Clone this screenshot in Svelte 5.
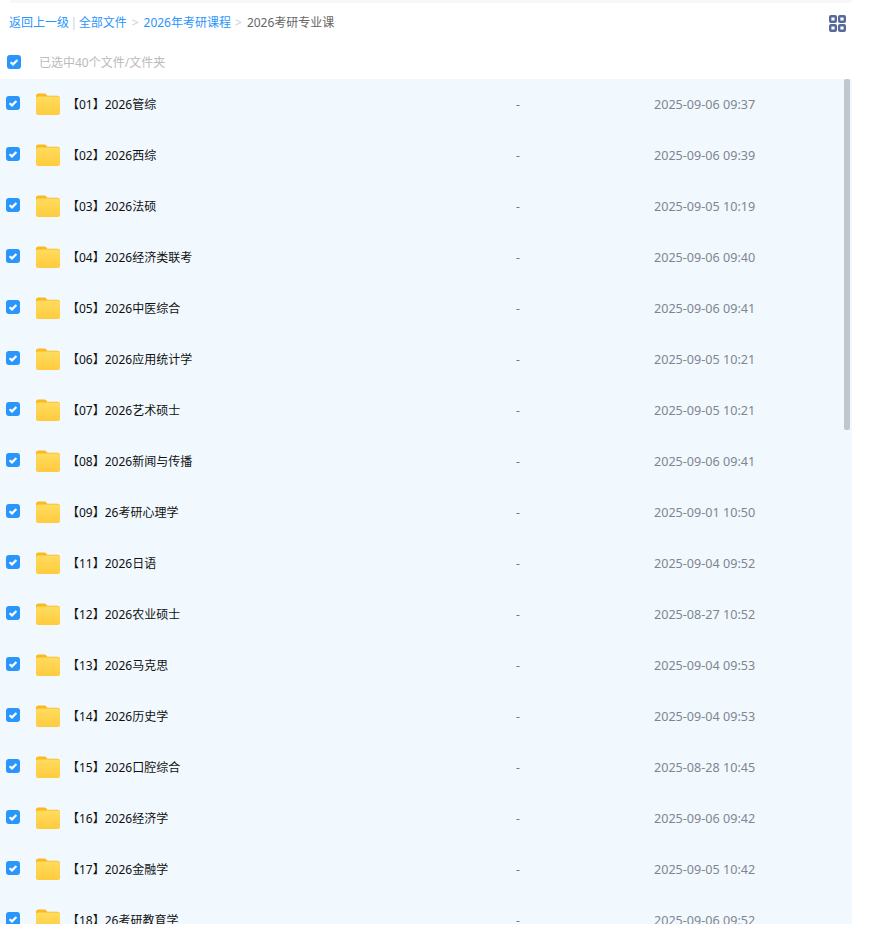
<script>
    const folders = [
        ['【01】2026管综', '2025-09-06 09:37'],
        ['【02】2026西综', '2025-09-06 09:39'],
        ['【03】2026法硕', '2025-09-05 10:19'],
        ['【04】2026经济类联考', '2025-09-06 09:40'],
        ['【05】2026中医综合', '2025-09-06 09:41'],
        ['【06】2026应用统计学', '2025-09-05 10:21'],
        ['【07】2026艺术硕士', '2025-09-05 10:21'],
        ['【08】2026新闻与传播', '2025-09-06 09:41'],
        ['【09】26考研心理学', '2025-09-01 10:50'],
        ['【11】2026日语', '2025-09-04 09:52'],
        ['【12】2026农业硕士', '2025-08-27 10:52'],
        ['【13】2026马克思', '2025-09-04 09:53'],
        ['【14】2026历史学', '2025-09-04 09:53'],
        ['【15】2026口腔综合', '2025-08-28 10:45'],
        ['【16】2026经济学', '2025-09-06 09:42'],
        ['【17】2026金融学', '2025-09-05 10:42'],
        ['【18】26考研教育学', '2025-09-06 09:52']
    ];
</script>

{#snippet checkbox()}
    <svg class="check" viewBox="0 0 14 14" width="14" height="14">
        <rect width="14" height="14" rx="3" fill="#2a95fb" />
        <path d="M3.600 7.200 6 9.400 10.400 5" fill="none" stroke="#fff" stroke-width="2.200" />
    </svg>
{/snippet}

<div class="page">
    <div class="topline"></div>
    <div class="crumbs">
        <a href="#back">返回上一级</a>
        <span class="sep bar">|</span>
        <a href="#all">全部文件</a>
        <span class="sep">&gt;</span>
        <a href="#course">2026年考研课程</a>
        <span class="sep last">&gt;</span>
        <span class="current">2026考研专业课</span>
        <svg class="grid" viewBox="0 0 17 17" width="17" height="17">
            <rect x="1.200" y="1.200" width="5.600" height="5.600" rx="0.800" />
            <rect x="10.200" y="1.200" width="5.600" height="5.600" rx="0.800" />
            <rect x="1.200" y="10.200" width="5.600" height="5.600" rx="0.800" />
            <rect x="10.200" y="10.200" width="5.600" height="5.600" rx="0.800" />
        </svg>
    </div>
    <div class="selected">
        {@render checkbox()}
        <span>已选中40个文件/文件夹</span>
    </div>
    <div class="list">
        {#each folders as [name, time]}
            <div class="row">
                {@render checkbox()}
                <svg class="folder" viewBox="0 0 24 22" width="24" height="22">
                    <path d="M0 3a2.500 2.500 0 0 1 2.500-2.500h5.700c1 0 1.500.4 2.200 1.100l1 1.100h10.100a2.500 2.500 0 0 1 2.500 2.500v4H0z" fill="#fbb81f" />
                    <rect y="3.500" width="24" height="18.500" rx="2" fill="url(#fold)" />
                    <defs>
                        <linearGradient id="fold" x1="0" y1="0" x2="0" y2="1">
                            <stop offset="0" stop-color="#ffdc5f" />
                            <stop offset="1" stop-color="#ffcb3d" />
                        </linearGradient>
                    </defs>
                </svg>
                <span class="name">{name}</span>
                <span class="size">-</span>
                <span class="time">{time}</span>
            </div>
        {/each}
        <div class="thumb"></div>
    </div>
</div>

<style>
    :global(body) {
        background: #fff;
    }

    .page {
        width: 852px;
        height: 924px;
        overflow: hidden;
        display: flex;
        flex-direction: column;
        font-family: "Noto Sans", "Noto Sans CJK SC", sans-serif;
        font-size: 12px;
    }

    .topline {
        height: 3px;
        margin-left: 10px;
        background: #f7f7f7;
        flex: none;
    }

    .crumbs {
        height: 38px;
        flex: none;
        display: flex;
        align-items: center;
        padding-left: 9px;
        color: #666;
    }

    .crumbs a {
        color: #2a95fb;
        text-decoration: none;
    }

    .sep {
        color: #c5cfdc;
        margin: 0 5px;
    }

    .sep.bar {
        margin: 0 1.500px;
    }

    .sep.last {
        margin: 0 5px 0 4px;
    }

    .grid {
        margin: 2px 6px 0 auto;
        fill: none;
        stroke: #566a9a;
        stroke-width: 2.400;
    }

    .selected {
        height: 38px;
        flex: none;
        display: flex;
        align-items: center;
        padding: 4px 0 0 7px;
        box-sizing: border-box;
        gap: 18px;
        color: #bbb;
    }

    .list {
        position: relative;
        flex: 1;
        min-height: 0;
        background: #f1f9ff;
    }

    .row {
        height: 51px;
        box-sizing: border-box;
        padding: 0 0 2px 6px;
        display: flex;
        align-items: center;
    }

    .check {
        flex: none;
    }

    .row .check {
        margin-top: -2px;
    }

    .folder {
        flex: none;
        margin: 1px 0 0 16px;
    }

    .name {
        margin-left: 7px;
        width: 449px;
        color: #111;
        flex: none;
    }

    .size {
        width: 138px;
        color: #777;
        flex: none;
        margin-top: 2px;
    }

    .time {
        color: #80868f;
        font-size: 12.600px;
        margin-top: 2px;
    }

    .thumb {
        position: absolute;
        top: 0;
        right: 2px;
        width: 6px;
        height: 351px;
        border-radius: 2px;
        background: #c1c7cb;
    }
</style>
